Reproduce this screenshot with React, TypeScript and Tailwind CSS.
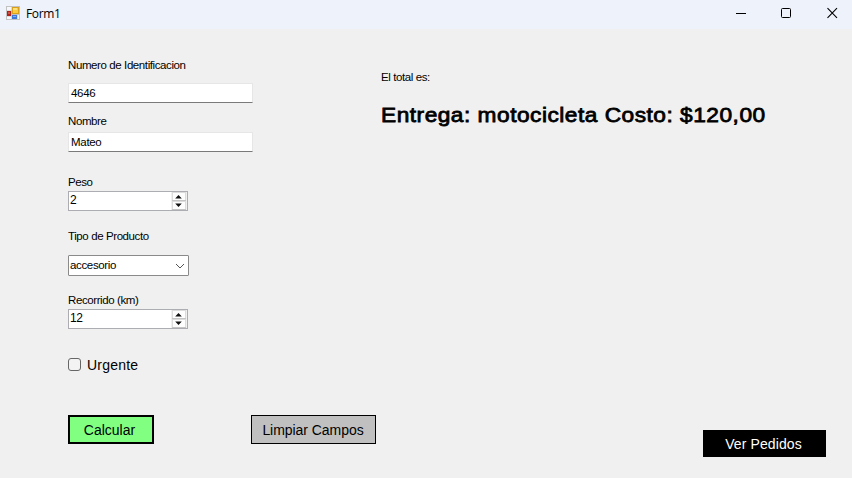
import React from "react";

function FormIcon() {
  return (
    <svg width="14" height="14" viewBox="0 0 14 14">
      <rect width="14" height="14" fill="#c2c2c2" />
      <rect x="1" y="1" width="4.5" height="3.5" fill="#f4f6fa" />
      <rect x="1" y="5" width="4" height="5" fill="#b0221a" />
      <rect x="2" y="6" width="2" height="2" fill="#cc5044" />
      <rect x="1" y="10.5" width="4.5" height="2.5" fill="#f4f6fa" />
      <rect x="6" y="1" width="7" height="7" fill="#d9a01c" />
      <rect x="7" y="2" width="5" height="5" fill="#fbcb3c" />
      <rect x="7" y="2" width="4" height="2" fill="#fde080" />
      <rect x="6" y="9" width="5" height="4" fill="#3f78d8" />
      <rect x="7" y="10" width="3" height="1" fill="#7fb0f4" />
      <rect x="11.5" y="9" width="1.5" height="4" fill="#f4f6fa" />
    </svg>
  );
}

function TitleBar() {
  return (
    <header className="flex h-[29px] items-start bg-[#eef2fa]">
      <div className="flex flex-1 items-start pt-1.5 pl-1.5">
        <FormIcon />
        <span className="ml-1.5 font-['Open_Sans','Noto_Sans',sans-serif] text-[12px] leading-[16px] tracking-[-0.35px]">Form1</span>
      </div>
      <svg className="mt-[7px] mr-[14px]" width="102" height="12" viewBox="0 0 102 12" fill="none" stroke="#000">
        <path d="M0 6.5H10" />
        <rect x="45.5" y="1.5" width="9" height="9" rx="1" />
        <path d="M91.5 1.2L101 10.8M101 1.2L91.5 10.8" strokeWidth="1.1" />
      </svg>
    </header>
  );
}

function Label({ className, children }: { className: string; children: string }) {
  return (
    <label className={`block h-[14px] text-[11.5px] leading-[14px] tracking-[-0.4px] whitespace-nowrap ${className}`}>
      {children}
    </label>
  );
}

function TextField({ className, value }: { className: string; value: string }) {
  return (
    <div className={`flex h-5 w-[185px] items-center border border-[#e6e6e6] border-b-[#7a7a7a] bg-white pt-0.5 pl-0.5 text-[11.5px] tracking-[-0.3px] ${className}`}>
      {value}
    </div>
  );
}

function Spinner({ value }: { value: string }) {
  return (
    <div className="mt-0.5 flex h-5 w-[120px] border border-[#abadb3] bg-white">
      <span className="flex-1 pl-px text-[12px] leading-[17px] tracking-[-0.4px]">{value}</span>
      <svg width="16" height="18" viewBox="0 0 16 18">
        <rect width="16" height="18" fill="#f0f0f0" />
        <rect x="1.5" y="0.5" width="13" height="8" fill="#fdfdfd" stroke="#dcdcdc" />
        <rect x="1.5" y="9.5" width="13" height="8" fill="#fdfdfd" stroke="#dcdcdc" />
        <path d="M1 8.5H15M1 17.5H15" stroke="#c4c4c4" />
        <path d="M4.2 6.6L7.5 3L10.8 6.6ZM4.2 11.4L7.5 15L10.8 11.4Z" fill="#111" />
      </svg>
    </div>
  );
}

export default function App() {
  return (
    <div className="flex h-[478px] w-[852px] flex-col overflow-hidden bg-[#f0f0f0] font-['Liberation_Sans',Arial,sans-serif] text-[11px] text-black">
      <TitleBar />
      <main className="flex flex-1 pl-[68px]">
        <section className="w-[313px]">
          <Label className="mt-[29px]">Numero de Identificacion</Label>
          <TextField className="mt-[11px]" value="4646" />
          <Label className="mt-[11px]">Nombre</Label>
          <TextField className="mt-1" value="Mateo" />
          <Label className="mt-[23px]">Peso</Label>
          <Spinner value="2" />
          <Label className="mt-[18px]">Tipo de Producto</Label>
          <div className="mt-3 flex h-[21px] w-[121px] items-center justify-between rounded-[1px] border border-[#8a8a8a] bg-white pr-[3px] pl-px">
            <span className="text-[11.5px] tracking-[-0.35px]">accesorio</span>
            <svg width="10" height="6" viewBox="0 0 10 6" fill="none" stroke="#555">
              <path d="M1 1L5 5L9 1" />
            </svg>
          </div>
          <Label className="mt-[17px]">Recorrido (km)</Label>
          <Spinner value="12" />
          <div className="mt-[27px] flex h-4 items-center text-[14px]">
            <span className="size-[13px] rounded-[3px] border border-[#666] bg-[#f3f3f3]" />
            <span className="ml-1.5 pt-0.5 tracking-[0.2px]">Urgente</span>
          </div>
          <div className="mt-[43px] flex text-[14px]">
            <button className="h-[29px] w-[86px] border-2 border-black bg-[#80ff80] pt-0.5 pr-[3px]">Calcular</button>
            <button className="ml-[97px] h-[29px] w-[125px] shrink-0 border border-black bg-[#c0c0c0] pt-0.5 pr-px tracking-[-0.05px]">Limpiar Campos</button>
          </div>
        </section>
        <section className="flex flex-1 flex-col">
          <Label className="mt-[41px]">El total es:</Label>
          <p className="mt-[19px] h-6 w-fit origin-left scale-x-[1.08] text-[21px] leading-6 tracking-[0.47px] whitespace-nowrap [-webkit-text-stroke:0.8px_black]">
            Entrega: motocicleta Costo: $120,00
          </p>
          <button className="mt-auto mr-[26px] mb-[21px] h-[27px] w-[123px] self-end bg-black pt-0.5 pr-0.5 text-[14px] tracking-[0.1px] text-white">
            Ver Pedidos
          </button>
        </section>
      </main>
    </div>
  );
}
